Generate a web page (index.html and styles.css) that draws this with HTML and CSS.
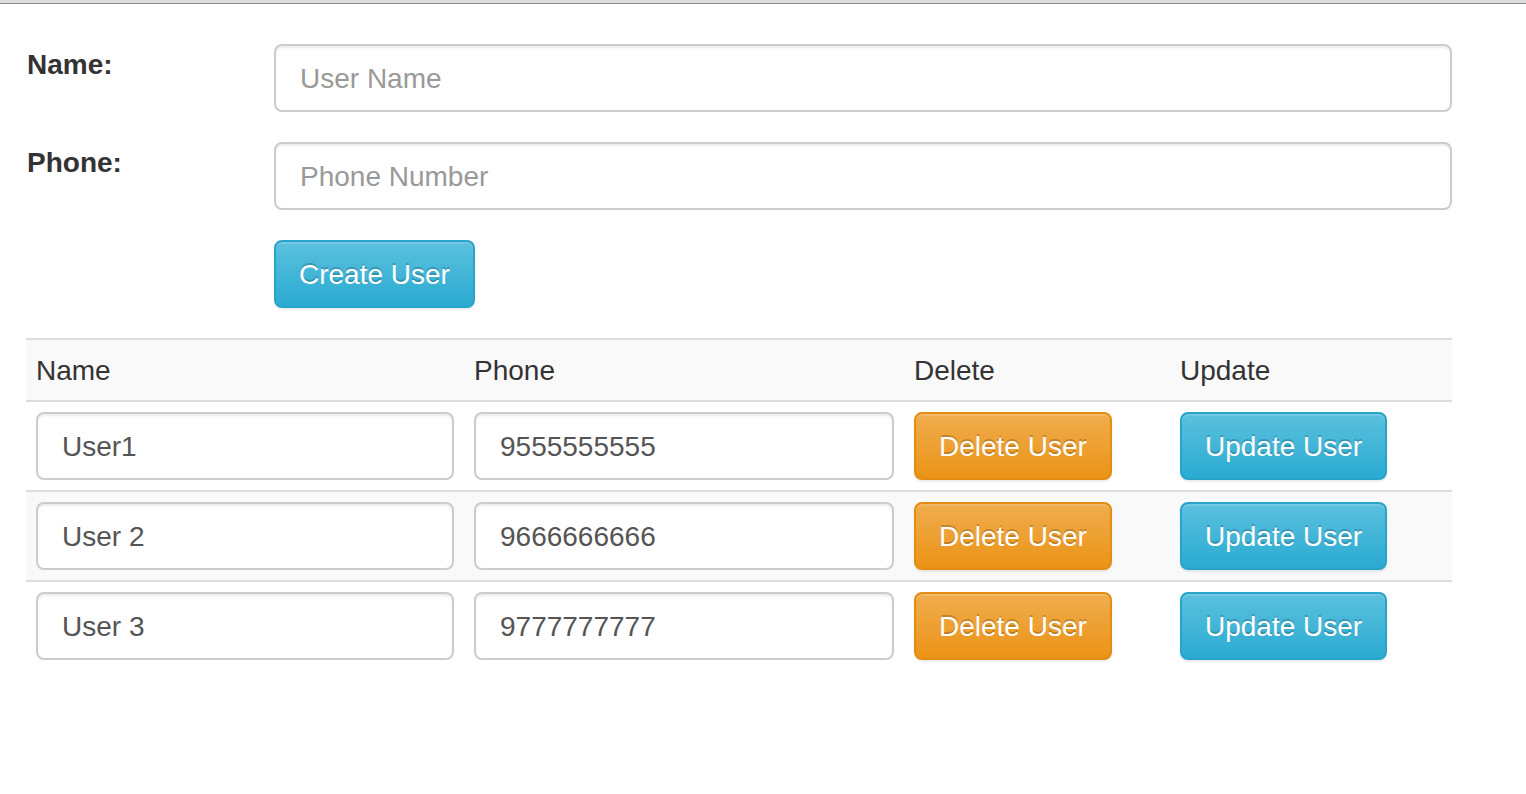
FILE: index.html
```html
<!DOCTYPE html>
<html>
<head>
<meta charset="utf-8">
<title>Users</title>
<link rel="stylesheet" href="styles.css">
</head>
<body>
<div class="chrome"></div>
<div class="page">
  <form class="form">
    <div class="form-row">
      <label class="label">Name:</label>
      <input class="input" type="text" placeholder="User Name">
    </div>
    <div class="form-row">
      <label class="label">Phone:</label>
      <input class="input" type="text" placeholder="Phone Number">
    </div>
    <div class="form-row">
      <span class="label"></span>
      <div><button type="button" class="btn btn-info">Create User</button></div>
    </div>
  </form>
  <table class="table">
    <colgroup>
      <col class="c-name"><col class="c-phone"><col class="c-del"><col class="c-upd">
    </colgroup>
    <tr class="striped head">
      <td>Name</td><td>Phone</td><td>Delete</td><td>Update</td>
    </tr>
    <tr>
      <td><input class="input" type="text" value="User1"></td>
      <td><input class="input" type="text" value="9555555555"></td>
      <td><button type="button" class="btn btn-warning">Delete User</button></td>
      <td><button type="button" class="btn btn-info">Update User</button></td>
    </tr>
    <tr class="striped">
      <td><input class="input" type="text" value="User 2"></td>
      <td><input class="input" type="text" value="9666666666"></td>
      <td><button type="button" class="btn btn-warning">Delete User</button></td>
      <td><button type="button" class="btn btn-info">Update User</button></td>
    </tr>
    <tr>
      <td><input class="input" type="text" value="User 3"></td>
      <td><input class="input" type="text" value="9777777777"></td>
      <td><button type="button" class="btn btn-warning">Delete User</button></td>
      <td><button type="button" class="btn btn-info">Update User</button></td>
    </tr>
  </table>
</div>
</body>
</html>
```
FILE: styles.css
```css
* { box-sizing: border-box; }
html, body {
  margin: 0;
  background: #fff;
  font-family: "Liberation Sans", Arial, sans-serif;
  font-size: 28px;
  line-height: 40px;
  color: #333;
}
.chrome {
  height: 4px;
  background: #dedede;
  border-bottom: 1px solid #8c8c8c;
}
.page {
  padding: 40px 0 0 26px;
  width: 1452px;
}
.form {
  margin: 0 0 30px 0;
}
.form-row {
  display: grid;
  grid-template-columns: 248px 1178px;
  margin-bottom: 30px;
}
.form-row:last-child { margin-bottom: 0; }
.label {
  font-weight: bold;
  padding-left: 1px;
  padding-top: 1px;
  display: block;
}
.input {
  display: block;
  width: 100%;
  height: 68px;
  padding: 13px 24px 11px;
  font-family: inherit;
  font-size: 28px;
  line-height: 40px;
  color: #555;
  background: #fff;
  border: 2px solid #ccc;
  border-radius: 8px;
  box-shadow: inset 0 2px 2px rgba(0,0,0,.075);
  outline: none;
}
.input::placeholder { color: #999; }
.btn {
  display: inline-block;
  height: 68px;
  padding: 13px 23px 11px;
  font-family: inherit;
  font-size: 28px;
  line-height: 40px;
  color: #fff;
  border-radius: 8px;
  border: 2px solid transparent;
  text-shadow: 0 -2px 0 rgba(0,0,0,.2);
  box-shadow: inset 0 2px 0 rgba(255,255,255,.15), 0 2px 2px rgba(0,0,0,.075);
  cursor: pointer;
  white-space: nowrap;
}
.btn-info {
  background-image: linear-gradient(to bottom, #5bc0de 0%, #2aabd2 100%);
  border-color: #28a4c9;
}
.btn-warning {
  background-image: linear-gradient(to bottom, #f0ad4e 0%, #eb9316 100%);
  border-color: #e38d13;
}
.table {
  border-collapse: collapse;
  table-layout: fixed;
  width: 1426px;
  border-top: 2px solid #ddd;
}
.c-name { width: 438px; }
.c-phone { width: 440px; }
.c-del { width: 266px; }
.c-upd { width: 282px; }
.table td {
  padding: 10px;
  border-bottom: 2px solid #ddd;
  vertical-align: top;
}
.table .head td { padding: 11px 10px 9px; }
.table tr:last-child td { border-bottom: none; }
.striped td { background: #f9f9f9; }
```
